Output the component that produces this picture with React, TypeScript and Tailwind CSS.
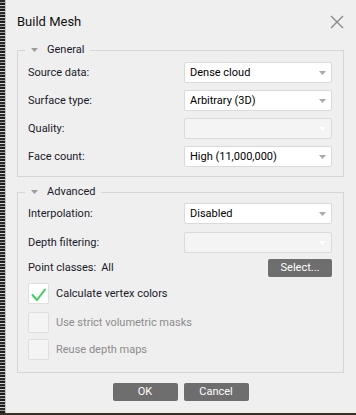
import React from 'react';

function Arrow({ light }: { light?: boolean }) {
  return (
    <svg width="7" height="4" viewBox="0 0 7 4" className="shrink-0">
      <polygon points="0,0 7,0 3.5,4" fill={light ? '#ffffff' : '#a8a8a8'} />
    </svg>
  );
}

function Select({ value, disabled }: { value?: string; disabled?: boolean }) {
  return (
    <div
      className={`flex-1 h-[21px] flex items-center justify-between pl-[5px] pr-[5px] border border-[#dadada] rounded-[2px] ${
        disabled ? 'bg-[#f4f4f4]' : 'bg-white'
      }`}
    >
      <span className="text-black">{value}</span>
      <Arrow light={disabled} />
    </div>
  );
}

function Row({ label, children, className = '' }: { label: string; children: React.ReactNode; className?: string }) {
  return (
    <div className={`flex items-center ${className}`}>
      <div className="w-[156px] shrink-0 text-[#1a1a2a]">{label}</div>
      {children}
    </div>
  );
}

function Group({ title, children, className = '' }: { title: string; children: React.ReactNode; className?: string }) {
  return (
    <fieldset className={`border border-[#d6d6d6] pl-[10px] pr-[11px] ${className}`}>
      <legend className="ml-[-3px] px-[6px] h-[16px] flex items-center">
        <svg width="7" height="4" viewBox="0 0 7 4" className="mr-[9px]">
          <polygon points="0,0 7,0 3.5,4" fill="#9c9c9c" />
        </svg>
        <span className="text-[#1a1a2a] leading-[16px]">{title}</span>
      </legend>
      {children}
    </fieldset>
  );
}

function Check({ label, checked, disabled, className = '' }: { label: string; checked?: boolean; disabled?: boolean; className?: string }) {
  return (
    <div className={`flex items-center gap-[7px] ${className}`}>
      <div
        className={`w-[21px] h-[21px] border border-[#dedede] rounded-[2px] ${disabled ? 'bg-[#f4f4f4]' : 'bg-white'}`}
      >
        {checked && (
          <svg width="19" height="19" viewBox="0 0 19 19">
            <polyline points="3.5,11 8,16 16,5.5" fill="none" stroke="#3ccf5c" strokeWidth="2" strokeLinecap="round" strokeLinejoin="round" />
          </svg>
        )}
      </div>
      <span className={disabled ? 'text-[#8c8c8c]' : 'text-[#1a1a2a]'}>{label}</span>
    </div>
  );
}

export default function App() {
  return (
    <div
      className="w-[356px] h-[415px] flex flex-col overflow-hidden text-[11px] leading-[14px]"
      style={{ fontFamily: 'Roboto, "Noto Sans", sans-serif' }}
    >
      <div className="flex flex-1">
        <div className="w-[5px] bg-[repeating-linear-gradient(0deg,#1c1c1c_0px,#1c1c1c_2px,#9a9a9a_2px,#9a9a9a_3px,#2a2a2a_3px,#2a2a2a_5px,#d0d0d0_5px,#d0d0d0_6px)]" />
        <div className="flex-1 bg-[#efefef] border-l border-[#c4c4c4] pl-[11px] pr-[12px] pt-[12px] flex flex-col">
          <div className="h-[19px] flex items-center justify-between">
            <span className="text-[13px] text-[#111] leading-[19px]">Build Mesh</span>
            <svg width="14" height="14" viewBox="0 0 14 14">
              <path d="M1 1 L13 13 M13 1 L1 13" stroke="#8a8a8a" strokeWidth="1.4" />
            </svg>
          </div>

          <Group title="General" className="mt-[11px] pt-[4px] pb-[9px]">
            <div className="flex flex-col gap-[7px]">
              <Row label="Source data:">
                <Select value="Dense cloud" />
              </Row>
              <Row label="Surface type:">
                <Select value="Arbitrary (3D)" />
              </Row>
              <Row label="Quality:">
                <Select disabled />
              </Row>
              <Row label="Face count:">
                <Select value="High (11,000,000)" />
              </Row>
            </div>
          </Group>

          <Group title="Advanced" className="mt-[7px] pt-[3px] pb-[12px]">
            <div className="flex flex-col">
              <Row label="Interpolation:">
                <Select value="Disabled" />
              </Row>
              <Row label="Depth filtering:" className="mt-[8px]">
                <Select disabled />
              </Row>
              <div className="flex items-center justify-between mt-[6px] h-[18px]">
                <div className="flex items-center gap-[5px] text-[#1a1a2a]">
                  <span>Point classes:</span>
                  <span>All</span>
                </div>
                <button className="w-[64px] h-[18px] bg-[#6e6e6e] text-white rounded-[2px]">Select...</button>
              </div>
              <Check label="Calculate vertex colors" checked className="mt-[6px]" />
              <Check label="Use strict volumetric masks" disabled className="mt-[8px]" />
              <Check label="Reuse depth maps" disabled className="mt-[6px]" />
            </div>
          </Group>

          <div className="flex justify-center gap-[6px] mt-[10px]">
            <button className="w-[65px] h-[18px] bg-[#6e6e6e] text-white rounded-[2px]">OK</button>
            <button className="w-[65px] h-[18px] bg-[#6e6e6e] text-white rounded-[2px]">Cancel</button>
          </div>
        </div>
      </div>
      <div className="h-[2px] bg-[#3a3024]" />
    </div>
  );
}
